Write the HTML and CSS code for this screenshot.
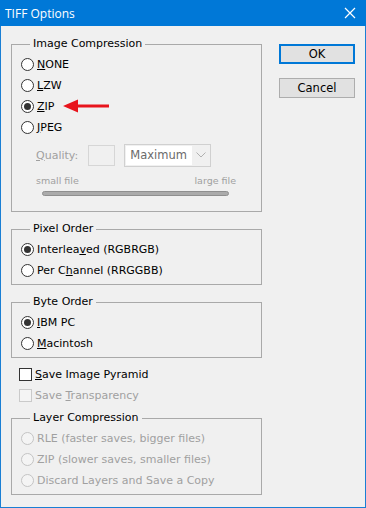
FILE: index.html
```html
<!DOCTYPE html>
<html>
<head>
  <title>TIFF Options</title>
  <link rel="stylesheet" href="styles.css">
</head>
<body>
  <div class="window">
    <div class="titlebar">
      <span class="title">TIFF Options</span>
      <svg class="close" width="12" height="12" viewBox="0 0 12 12">
        <path d="M1 1 L11 11 M11 1 L1 11" stroke="#fff" stroke-width="1.2" fill="none"/>
      </svg>
    </div>
    <div class="content">
      <div class="left">
        <fieldset class="group compression">
          <legend>Image Compression</legend>
          <div class="row"><span class="radio"></span><span><u>N</u>ONE</span></div>
          <div class="row"><span class="radio"></span><span><u>L</u>ZW</span></div>
          <div class="row zip">
            <span class="radio checked"></span><span><u>Z</u>IP</span>
            <svg class="arrow" width="48" height="16" viewBox="0 0 48 16">
              <path d="M0 8 L15 1.5 L15 6.5 L46 6.5 L46 9.5 L15 9.5 L15 14.5 Z" fill="#e8141c"/>
            </svg>
          </div>
          <div class="row"><span class="radio"></span><span><u>J</u>PEG</span></div>
          <div class="quality">
            <span class="disabled"><u>Q</u>uality:</span>
            <span class="qbox"></span>
            <span class="select"><span class="select-value">Maximum</span><span class="chevron">
              <svg width="10" height="6" viewBox="0 0 10 6"><path d="M0.5 0.5 L5 5 L9.5 0.5" stroke="#b0b0b0" fill="none"/></svg>
            </span></span>
          </div>
          <div class="scale"><span>small file</span><span>large file</span></div>
          <div class="track"></div>
        </fieldset>

        <fieldset class="group">
          <legend>Pixel Order</legend>
          <div class="row"><span class="radio checked"></span><span>Interlea<u>v</u>ed (RGBRGB)</span></div>
          <div class="row"><span class="radio"></span><span>Per C<u>h</u>annel (RRGGBB)</span></div>
        </fieldset>

        <fieldset class="group">
          <legend>Byte Order</legend>
          <div class="row"><span class="radio checked"></span><span><u>I</u>BM PC</span></div>
          <div class="row"><span class="radio"></span><span><u>M</u>acintosh</span></div>
        </fieldset>

        <div class="checks">
          <div class="row"><span class="check"></span><span><u>S</u>ave Image Pyramid</span></div>
          <div class="row disabled"><span class="check off"></span><span>Save <u>T</u>ransparency</span></div>
        </div>

        <fieldset class="group">
          <legend>Layer Compression</legend>
          <div class="row disabled"><span class="radio off"></span><span>RLE (faster saves, bigger files)</span></div>
          <div class="row disabled"><span class="radio off"></span><span>ZIP (slower saves, smaller files)</span></div>
          <div class="row disabled"><span class="radio off"></span><span>Discard Layers and Save a Copy</span></div>
        </fieldset>
      </div>
      <div class="buttons">
        <div class="btn default">OK</div>
        <div class="btn">Cancel</div>
      </div>
    </div>
  </div>
</body>
</html>
```

FILE: styles.css
```css
body {
  margin: 0;
  font-family: "DejaVu Sans", sans-serif;
  font-size: 11px;
  color: #000;
}

.window {
  width: 366px;
  height: 508px;
  box-sizing: border-box;
  border: 1px solid #1a7fd4;
  border-top: none;
  background: #f0f0f0;
  display: flex;
  flex-direction: column;
}

.titlebar {
  height: 26px;
  margin: 0 -1px;
  background: #0078d7;
  display: flex;
  align-items: center;
  justify-content: space-between;
  padding: 0 10px 0 5px;
}

.title {
  font-family: "Open Sans", sans-serif;
  font-size: 12px;
  color: #fff;
}

.content {
  display: flex;
  padding: 11px 0 0 10px;
}

.left {
  width: 251px;
}

.group {
  margin: 0;
  padding: 0 0 3px 9px;
  border: 1px solid #a9a9a9;
  min-width: 0;
}

.group legend {
  margin-left: 9px;
  padding: 0 3px;
  line-height: 14px;
}

.group + .group {
  margin-top: 10px;
}

.group legend + .row {
  margin-top: 3px;
}

.row {
  display: flex;
  align-items: center;
  gap: 3px;
  height: 21px;
}

.zip {
  position: relative;
}

.arrow {
  position: absolute;
  left: 42px;
  top: 2px;
}

.radio {
  width: 13px;
  height: 13px;
  box-sizing: border-box;
  border: 1px solid #333;
  border-radius: 50%;
  background: #fff;
  display: flex;
  align-items: center;
  justify-content: center;
}

.radio.checked::after {
  content: "";
  width: 7px;
  height: 7px;
  border-radius: 50%;
  background: #333;
}

.radio.off {
  border-color: #c4c4c4;
  background: #f4f4f4;
}

.check {
  width: 13px;
  height: 13px;
  box-sizing: border-box;
  border: 1px solid #333;
  background: #fff;
}

.check.off {
  border-color: #cacaca;
  background: #f4f4f4;
}

.disabled {
  color: #a0a0a0;
}

.quality {
  display: flex;
  align-items: center;
  height: 22px;
  margin-top: 6px;
  padding-left: 15px;
}

.qbox {
  width: 27px;
  height: 21px;
  box-sizing: border-box;
  border: 1px solid #d6d6d6;
  margin-left: 10px;
}

.select {
  display: flex;
  width: 87px;
  height: 23px;
  box-sizing: border-box;
  border: 1px solid #d0d0d0;
  margin-left: 9px;
  color: #6a6a6a;
  font-size: 11.5px;
}

.select-value {
  flex: 1;
  background: #fff;
  margin: 1px 0 1px 1px;
  padding-left: 4px;
  line-height: 19px;
}

.chevron {
  width: 18px;
  display: flex;
  align-items: center;
  justify-content: center;
}

.scale {
  display: flex;
  justify-content: space-between;
  width: 200px;
  margin: 8px 0 0 15px;
  font-size: 9.5px;
  line-height: 14px;
  color: #a0a0a0;
}

.track {
  width: 187px;
  height: 5px;
  margin: 3px 0 12px 21px;
  box-sizing: border-box;
  border: 1px solid #8f8f8f;
  border-radius: 3px;
  background: #ababab;
}

.checks {
  margin: 6px 0 5px 8px;
}

.buttons {
  display: flex;
  flex-direction: column;
  gap: 14px;
  margin: 7px 0 0 17px;
}

.btn {
  width: 76px;
  height: 20px;
  box-sizing: border-box;
  border: 1px solid #adadad;
  background: #e1e1e1;
  display: flex;
  align-items: center;
  justify-content: center;
  font-size: 11.5px;
}

.btn.default {
  border: 2px solid #0078d7;
}
```
